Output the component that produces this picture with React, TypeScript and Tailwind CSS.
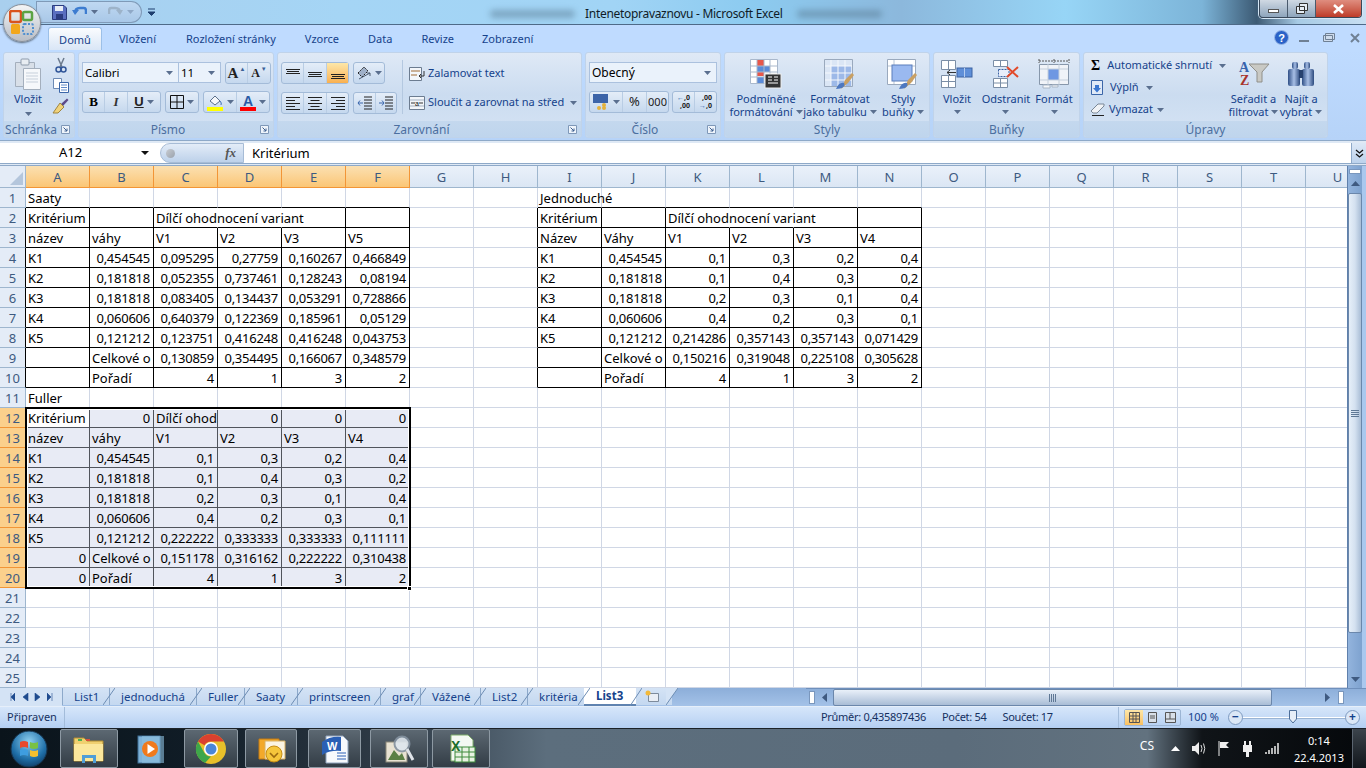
import type { ReactNode } from 'react';

const UI = { fontFamily: '"Noto Sans", sans-serif' };

const COLS = 'ABCDEFGHIJKLMNOPQRSTU'.split('');

// obsah listu: řádek -> sloupec -> text
const saaty: string[][] = [
  ['Kritérium', '', 'Dílčí ohodnocení variant', '', '', ''],
  ['název', 'váhy', 'V1', 'V2', 'V3', 'V5'],
  ['K1', '0,454545', '0,095295', '0,27759', '0,160267', '0,466849'],
  ['K2', '0,181818', '0,052355', '0,737461', '0,128243', '0,08194'],
  ['K3', '0,181818', '0,083405', '0,134437', '0,053291', '0,728866'],
  ['K4', '0,060606', '0,640379', '0,122369', '0,185961', '0,05129'],
  ['K5', '0,121212', '0,123751', '0,416248', '0,416248', '0,043753'],
  ['', 'Celkové o', '0,130859', '0,354495', '0,166067', '0,348579'],
  ['', 'Pořadí', '4', '1', '3', '2'],
];
const simple: string[][] = [
  ['Kritérium', '', 'Dílčí ohodnocení variant', '', '', ''],
  ['Název', 'Váhy', 'V1', 'V2', 'V3', 'V4'],
  ['K1', '0,454545', '0,1', '0,3', '0,2', '0,4'],
  ['K2', '0,181818', '0,1', '0,4', '0,3', '0,2'],
  ['K3', '0,181818', '0,2', '0,3', '0,1', '0,4'],
  ['K4', '0,060606', '0,4', '0,2', '0,3', '0,1'],
  ['K5', '0,121212', '0,214286', '0,357143', '0,357143', '0,071429'],
  ['', 'Celkové o', '0,150216', '0,319048', '0,225108', '0,305628'],
  ['', 'Pořadí', '4', '1', '3', '2'],
];
const fuller: string[][] = [
  ['Kritérium', '0', 'Dílčí ohod', '0', '0', '0'],
  ['název', 'váhy', 'V1', 'V2', 'V3', 'V4'],
  ['K1', '0,454545', '0,1', '0,3', '0,2', '0,4'],
  ['K2', '0,181818', '0,1', '0,4', '0,3', '0,2'],
  ['K3', '0,181818', '0,2', '0,3', '0,1', '0,4'],
  ['K4', '0,060606', '0,4', '0,2', '0,3', '0,1'],
  ['K5', '0,121212', '0,222222', '0,333333', '0,333333', '0,111111'],
  ['0', 'Celkové o', '0,151178', '0,316162', '0,222222', '0,310438'],
  ['0', 'Pořadí', '4', '1', '3', '2'],
];

function cellText(r: number, c: number): string {
  if (r === 1 && c === 0) return 'Saaty';
  if (r === 1 && c === 8) return 'Jednoduché';
  if (r === 11 && c === 0) return 'Fuller';
  if (r >= 2 && r <= 10 && c <= 5) return saaty[r - 2][c];
  if (r >= 2 && r <= 10 && c >= 8 && c <= 13) return simple[r - 2][c - 8];
  if (r >= 12 && r <= 20 && c <= 5) return fuller[r - 12][c];
  return '';
}

const inTable = (r: number, c: number) =>
  (r >= 2 && r <= 10 && ((c >= 0 && c <= 5) || (c >= 8 && c <= 13))) || (r >= 12 && r <= 20 && c >= 0 && c <= 5);
const inSelection = (r: number, c: number) => r >= 12 && r <= 20 && c <= 5;
const isMerged = (r: number, c: number) => r === 2 && (c === 2 || c === 3 || c === 10 || c === 11);
const spills = (r: number, c: number) => (r === 2 && (c === 2 || c === 10)) || (r === 1 && c === 8);

function Cell({ r, c }: { r: number; c: number }) {
  const text = cellText(r, c);
  const numeric = /^[0-9,]+$/.test(text);
  const sel = inSelection(r, c) && !(r === 12 && c === 0);
  const rightDark = inTable(r, c) || inTable(r, c + 1);
  const bottomDark = inTable(r, c) || inTable(r + 1, c);
  const rightBorder = isMerged(r, c)
    ? 'border-r-transparent'
    : inSelection(r, c) && c < 5
      ? 'border-r-[#50545c]'
      : rightDark
        ? 'border-r-black'
        : 'border-r-[#d0d7e5]';
  const bottomBorder = inSelection(r, c) && r < 20 ? 'border-b-[#50545c]' : bottomDark ? 'border-b-black' : 'border-b-[#d0d7e5]';
  return (
    <div
      className={`w-[64px] h-[20px] shrink-0 border-r border-b pl-[2px] pr-[3px] text-[13px] leading-[21px] text-black whitespace-nowrap ${rightBorder} ${bottomBorder} ${
        sel ? 'bg-[#e8ebf5]' : 'bg-white'
      } ${numeric ? 'text-right tracking-[-0.25px]' : 'text-left'} ${spills(r, c) ? 'overflow-visible z-10' : 'overflow-hidden'}`}
    >
      {text}
    </div>
  );
}

function Sheet() {
  const rows = Array.from({ length: 25 }, (_, i) => i + 1);
  return (
    <div className="relative flex-1 overflow-hidden bg-white">
      <div className="flex h-[22px]">
        <div className="w-[26px] h-[22px] shrink-0 border-r border-b border-[#9eb6ce] bg-[#e4ecf7] flex items-end justify-end p-[2px]">
          <svg width="14" height="14" viewBox="0 0 14 14"><path d="M14 1V14H1Z" fill="#b4c6dc" /></svg>
        </div>
        {COLS.map((name, c) => (
          <div
            key={name}
            className={`w-[64px] shrink-0 border-r border-b text-center text-[13px] leading-[22px] ${
              c <= 5
                ? 'border-[#f29536] bg-gradient-to-b from-[#fbe0b1] to-[#fbc675] text-[#3d5a80]'
                : 'border-[#9eb6ce] bg-gradient-to-b from-[#eaf1fa] to-[#dbe6f4] text-[#3d5a80]'
            }`}
          >
            {name}
          </div>
        ))}
      </div>
      {rows.map((r) => (
        <div key={r} className="flex h-[20px]">
          <div
            className={`w-[26px] shrink-0 border-r border-b text-center text-[13px] leading-[21px] text-[#3d5a80] ${
              r >= 12 && r <= 20
                ? 'border-b-[#f29536] border-r-[#f29536] bg-[#fbd08c]'
                : inTable(r, 0)
                  ? 'border-b-[#9eb6ce] border-r-black bg-[#e4ecf7]'
                  : 'border-[#9eb6ce] bg-[#e4ecf7]'
            }`}
          >
            {r}
          </div>
          {COLS.map((_, c) => (
            <Cell key={c} r={r} c={c} />
          ))}
        </div>
      ))}
      {/* rámeček výběru A12:F20 */}
      <div className="absolute z-20 left-[25px] top-[241px] w-[386px] h-[182px] border-2 border-black shadow-[inset_0_0_0_1px_#fff] pointer-events-none" />
      <div className="absolute z-20 left-[407px] top-[420px] w-[5px] h-[5px] bg-black border border-white pointer-events-none" />
    </div>
  );
}

function Caret({ className = '' }: { className?: string }) {
  return (
    <svg width="7" height="4" viewBox="0 0 7 4" className={`shrink-0 ${className}`}>
      <path d="M0 0H7L3.5 4Z" fill="#5a6f8f" />
    </svg>
  );
}

function Group({ w, label, launcher, children }: { w: number; label: string; launcher?: boolean; children: ReactNode }) {
  return (
    <div
      className="relative shrink-0 h-[86px] rounded-[3px] border border-[#c0d3ea] bg-gradient-to-b from-[#dfe9f6] via-[#cbdcf0] to-[#d5e3f4] flex flex-col overflow-hidden"
      style={{ width: w }}
    >
      <div className="h-[68px] flex">{children}</div>
      <div className={`h-[16px] bg-gradient-to-b from-[#c4d8ee] to-[#bfd5ed] text-center text-[12px] leading-[17px] text-[#4c6f9f] ${launcher ? 'pr-[16px]' : ''}`}>{label}</div>
      {launcher && (
        <svg width="9" height="9" viewBox="0 0 9 9" className="absolute right-[4px] bottom-[3px]">
          <path d="M.5.5H8.5V8.5H.5Z" fill="#eef4fb" stroke="#7f98b8" />
          <path d="M2.5 2.5L6 6M6 3.5V6H3.5" fill="none" stroke="#3d5f8f" />
        </svg>
      )}
    </div>
  );
}

function Strip({ children, className = '' }: { children: ReactNode; className?: string }) {
  return (
    <div className={`h-[22px] flex items-stretch rounded-[3px] border border-[#a3bbd8] bg-gradient-to-b from-[#e4edf8] to-[#c5d8ee] divide-x divide-[#b9cde4] ${className}`}>
      {children}
    </div>
  );
}

function StripBtn({ w, active, children }: { w: number; active?: boolean; children: ReactNode }) {
  return (
    <div
      className={`flex items-center justify-center gap-[3px] ${active ? 'bg-gradient-to-b from-[#fde7a8] to-[#f9b04f]' : ''}`}
      style={{ width: w }}
    >
      {children}
    </div>
  );
}

function Lines({ kind }: { kind: 'l' | 'c' | 'r' }) {
  const ws = [14, 9, 14, 9, 14];
  return (
    <svg width="16" height="14" viewBox="0 0 16 14">
      {ws.map((w, i) => {
        const x = kind === 'l' ? 1 : kind === 'c' ? 8 - w / 2 : 15 - w;
        return <rect key={i} x={x} y={1 + i * 3} width={w} height="1" fill="#222" />;
      })}
    </svg>
  );
}

function VAlign({ top }: { top: number }) {
  return (
    <svg width="16" height="14" viewBox="0 0 16 14">
      {[0, 2, 4].map((o) => (
        <rect key={o} x={o === 2 ? 2 : 1} y={top + o} width={o === 2 ? 12 : 14} height="1" fill="#222" />
      ))}
    </svg>
  );
}

function RibbonLabel({ lines, carets = true }: { lines: string[]; carets?: boolean }) {
  return (
    <div className="text-center text-[11px] leading-[13px] text-[#15428b] whitespace-nowrap">
      {lines.map((l, i) => (
        <div key={i} className="flex items-center justify-center gap-[3px]">
          {l}
          {carets && i === lines.length - 1 && <Caret />}
        </div>
      ))}
    </div>
  );
}

function BigButton({ w, icon, lines, caretBelow }: { w: number; icon: ReactNode; lines: string[]; caretBelow?: boolean }) {
  return (
    <div className="flex flex-col items-center pt-[4px] shrink-0" style={{ width: w }}>
      <div className="h-[33px] flex items-center justify-center">{icon}</div>
      <div className="mt-[2px]">
        <RibbonLabel lines={lines} carets={!caretBelow} />
        {caretBelow && (
          <div className="flex justify-center mt-[5px]">
            <Caret />
          </div>
        )}
      </div>
    </div>
  );
}

function CondFormatIcon() {
  return (
    <svg width="32" height="30" viewBox="0 0 32 30">
      <path d="M.5.5H27.5V24.5H.5Z" fill="#fff" stroke="#a9b8cc" />
      <rect x="7" y="1" width="7" height="16" fill="#e8574a" />
      <rect x="7" y="7" width="13" height="6" fill="#5b8bd8" />
      <rect x="7" y="18" width="7" height="6" fill="#5b8bd8" />
      <path d="M7 1V25M14 1V25M20 1V25M1 7H28M1 13H28M1 18H28" stroke="#a9b8cc" fill="none" />
      <rect x="15" y="15" width="16" height="14" fill="#333" stroke="#eee" />
      <path d="M18 18H22M18 21H22M18 24H28M24 18H28M24 21H28" stroke="#fff" />
    </svg>
  );
}

function Brush() {
  return (
    <g>
      <path d="M17 30L21 21L28 14L30 16L24 24Z" fill="#c9a063" />
      <path d="M12 30C14 25 17 23 20 24C22 27 18 30 12 30Z" fill="#4d78c0" />
    </g>
  );
}

function TableFormatIcon() {
  return (
    <svg width="32" height="30" viewBox="0 0 32 30">
      <path d="M.5.5H28.5V27.5H.5Z" fill="#dbe6f5" stroke="#9aa9bd" />
      <rect x="7" y="7" width="20" height="20" fill="#9db9e8" />
      <path d="M7 1V27M14 1V27M21 1V27M1 7H28M1 14H28M1 21H28" stroke="#f5f8fc" fill="none" />
      <Brush />
    </svg>
  );
}

function CellStyleIcon() {
  return (
    <svg width="32" height="30" viewBox="0 0 32 30">
      <path d="M.5.5H28.5V25.5H.5Z" fill="#fff" stroke="#9aa9bd" />
      <path d="M1 7H28M7 1V25" stroke="#b5c3d5" />
      <rect x="5" y="6" width="20" height="16" fill="#9ab9f0" stroke="#5b7fbb" />
      <Brush />
    </svg>
  );
}

function InsertCellsIcon() {
  return (
    <svg width="32" height="28" viewBox="0 0 32 28">
      <path d="M.5.5H14.5V9.5H.5ZM.5 15.5H14.5V27.5H.5ZM7.5.5V9.5M7.5 15.5V27.5M.5 21.5H14.5" fill="#fff" stroke="#7b8ea6" />
      <path d="M15 12.5H6M9 10L6 12.5L9 15" fill="none" stroke="#333" />
      <rect x="16" y="8" width="15" height="9" fill="#5f8fd8" stroke="#3c63a2" />
      <path d="M23.5 8V17" stroke="#b5cdf0" />
    </svg>
  );
}

function DeleteCellsIcon() {
  return (
    <svg width="26" height="28" viewBox="0 0 26 28">
      <path d="M.5.5H14.5V6.5H.5ZM.5 18.5H14.5V27.5H.5ZM7.5.5V6.5M7.5 18.5V27.5M.5 23H14.5" fill="#fff" stroke="#7b8ea6" />
      <path d="M5.5 9.5H16V16.5H5.5Z" fill="#e8eefb" stroke="#3c63a2" strokeDasharray="2 1" />
      <path d="M14 7L25 17M25 7L14 17" stroke="#e24a2a" strokeWidth="2" />
    </svg>
  );
}

function FormatCellsIcon() {
  return (
    <svg width="32" height="30" viewBox="0 0 32 30">
      <path d="M1 2H31M1 0V4M31 0V4M16 0V4" stroke="#555" strokeDasharray="2 1" fill="none" />
      <path d="M1.5 5.5H30.5V25.5H1.5Z" fill="#f0f3f8" stroke="#8797ab" />
      <rect x="10" y="10" width="11" height="11" fill="#6e97e2" />
      <path d="M10 5V26M21 5V26M2 10H30M2 21H30" stroke="#c4cfdc" />
      <path d="M5 26H12V29H5ZM14 26H20V28H14Z" fill="#f5f7fa" stroke="#a9b6c6" />
    </svg>
  );
}

function SortIcon() {
  return (
    <svg width="32" height="32" viewBox="0 0 32 32">
      <path d="M11 6H31L24 14V24H19V14Z" fill="#c9c9c4" stroke="#8f8f8a" />
      <text x="1" y="14" fontSize="14" fontFamily="'Liberation Serif', serif" fontWeight="700" fill="#3763ad">A</text>
      <text x="2" y="27" fontSize="14" fontFamily="'Liberation Serif', serif" fontWeight="700" fill="#a8342c">Z</text>
    </svg>
  );
}

function BinocularsIcon() {
  return (
    <svg width="28" height="26" viewBox="0 0 28 26">
      <defs>
        <linearGradient id="bin" x1="0" x2="1">
          <stop offset="0" stopColor="#2f4f86" />
          <stop offset=".5" stopColor="#a8bfe6" />
          <stop offset="1" stopColor="#2c4a7e" />
        </linearGradient>
      </defs>
      <rect x="5" y="1" width="6" height="7" rx="2" fill="url(#bin)" />
      <rect x="17" y="1" width="6" height="7" rx="2" fill="url(#bin)" />
      <rect x="1" y="8" width="12" height="17" rx="2" fill="url(#bin)" />
      <rect x="15" y="8" width="12" height="17" rx="2" fill="url(#bin)" />
      <rect x="12" y="9" width="4" height="8" fill="#27416f" />
    </svg>
  );
}

function Ribbon() {
  return (
    <div className="h-[91px] bg-gradient-to-b from-[#bfdbff] to-[#b6d3f8] flex gap-[3px] pl-[3px] pt-[2px] border-b border-[#8ea9c8]">
      <Group w={72} label="Schránka" launcher>
        <div className="w-[48px] flex flex-col items-center pt-[5px]">
          <svg width="28" height="32" viewBox="0 0 28 32">
            <path d="M1.5 4.5H20.5V28.5H1.5Z" fill="#d8dfe8" stroke="#a4afbd" />
            <rect x="7" y="1" width="8" height="6" rx="1" fill="#e8edf2" stroke="#8e9bab" />
            <path d="M9.5 10.5H26.5V31.5H9.5Z" fill="#f6f8fb" stroke="#a4afbd" />
            <path d="M12 15H24M12 18H24M12 21H24M12 24H24" stroke="#c7d0db" />
          </svg>
          <div className="mt-[2px] text-[11px] leading-[14px] text-[#15428b]">Vložit</div>
          <Caret className="mt-[6px]" />
        </div>
        <div className="flex flex-col items-center gap-[5px] pt-[4px]">
          <svg width="14" height="16" viewBox="0 0 14 16">
            <path d="M4 1L8 10M10 1L6 10" stroke="#6c7a8d" strokeWidth="1.5" />
            <circle cx="4.5" cy="12.5" r="2.5" fill="none" stroke="#33589a" strokeWidth="1.5" />
            <circle cx="9.5" cy="12.5" r="2.5" fill="none" stroke="#33589a" strokeWidth="1.5" />
          </svg>
          <svg width="16" height="15" viewBox="0 0 16 15">
            <path d="M.5.5H8.5V10.5H.5Z" fill="#fff" stroke="#6c8ab5" />
            <path d="M6.5 4.5H15.5V14.5H6.5Z" fill="#fff" stroke="#3b66a8" />
            <path d="M8 7H14M8 9.5H14M8 12H14" stroke="#5f8ac8" />
          </svg>
          <svg width="17" height="16" viewBox="0 0 17 16">
            <path d="M9 6L15 .5L16.5 2L11 8Z" fill="#5d4b8a" />
            <path d="M8 5L12 9L6 15H1Z" fill="#f0d27a" stroke="#a08540" />
          </svg>
        </div>
      </Group>
      <Group w={196} label="Písmo" launcher>
        <div className="pl-[3px] pt-[9px] flex flex-col gap-[8px]">
          <div className="flex h-[21px]">
            <div className="w-[97px] border border-[#abc1de] bg-[#eaf2fb] flex items-center justify-between px-[2px] pr-[5px] text-[11.5px] text-black">
              Calibri
              <Caret />
            </div>
            <div className="w-[42px] border border-l-0 border-[#abc1de] bg-[#eaf2fb] flex items-center justify-between px-[2px] pr-[5px] text-[11.5px] text-black">
              11
              <Caret />
            </div>
            <Strip className="ml-[4px] h-[21px]">
              <StripBtn w={22}>
                <span className="text-[15px] font-bold text-[#222] leading-none" style={{ fontFamily: '"Liberation Serif", serif' }}>A</span>
                <span className="text-[6px] text-[#3a5f96] -mt-[8px] -ml-[2px]">▲</span>
              </StripBtn>
              <StripBtn w={22}>
                <span className="text-[12px] font-bold text-[#222] leading-none" style={{ fontFamily: '"Liberation Serif", serif' }}>A</span>
                <span className="text-[6px] text-[#3a5f96] -mt-[8px] -ml-[2px]">▼</span>
              </StripBtn>
            </Strip>
          </div>
          <div className="flex gap-[4px]">
            <Strip>
              <StripBtn w={22}><span className="text-[13px] font-bold text-black" style={{ fontFamily: '"Liberation Serif", serif' }}>B</span></StripBtn>
              <StripBtn w={23}><span className="text-[13px] italic font-bold text-[#333]" style={{ fontFamily: '"Liberation Serif", serif' }}>I</span></StripBtn>
              <StripBtn w={32}>
                <span className="text-[13px] font-bold underline text-[#222]" style={{ fontFamily: '"Liberation Sans", sans-serif' }}>U</span>
                <Caret />
              </StripBtn>
            </Strip>
            <Strip>
              <StripBtn w={32}>
                <svg width="14" height="14" viewBox="0 0 14 14"><path d="M.5.5H13.5V13.5H.5ZM7 .5V13.5M.5 7H13.5" fill="none" stroke="#111" /></svg>
                <Caret />
              </StripBtn>
            </Strip>
            <Strip>
              <StripBtn w={33}>
                <svg width="17" height="17" viewBox="0 0 17 17">
                  <path d="M3 7L8 2L13 7L8 11Z" fill="#f5f7fa" stroke="#5b6f8a" />
                  <path d="M13 7Q15 9 14 11" stroke="#3f6fb5" fill="none" />
                  <rect x="0" y="13" width="16" height="4" fill="#ffff00" />
                </svg>
                <Caret />
              </StripBtn>
              <StripBtn w={32}>
                <span className="relative w-[16px] h-[17px] text-center text-[14px] leading-[14px] font-bold text-[#2a5aa5]" style={{ fontFamily: '"Liberation Sans", sans-serif' }}>
                  A
                  <span className="absolute left-0 bottom-0 w-[16px] h-[4px] bg-[#ff0000]" />
                </span>
                <Caret />
              </StripBtn>
            </Strip>
          </div>
        </div>
      </Group>
      <Group w={305} label="Zarovnání" launcher>
        <div className="pl-[3px] pt-[9px] w-[121px] shrink-0 flex flex-col gap-[8px]">
          <div className="flex gap-[4px]">
            <Strip className="h-[21px]">
              <StripBtn w={22}><VAlign top={3} /></StripBtn>
              <StripBtn w={23}><VAlign top={6} /></StripBtn>
              <StripBtn w={21} active><VAlign top={8} /></StripBtn>
            </Strip>
            <Strip className="h-[21px]">
              <StripBtn w={30}>
                <svg width="16" height="15" viewBox="0 0 16 15">
                  <path d="M2 7L8 1L12 5L6 11Z" fill="#9fb0c8" stroke="#222" strokeDasharray="2 1" />
                  <path d="M3 13L14 7M11 7H14V10" stroke="#4a5a70" fill="none" />
                </svg>
                <Caret />
              </StripBtn>
            </Strip>
          </div>
          <div className="flex gap-[4px]">
            <Strip>
              <StripBtn w={22}><Lines kind="l" /></StripBtn>
              <StripBtn w={23}><Lines kind="c" /></StripBtn>
              <StripBtn w={21}><Lines kind="r" /></StripBtn>
            </Strip>
            <Strip>
              <StripBtn w={22}>
                <svg width="16" height="14" viewBox="0 0 16 14"><path d="M7 1H15M7 4H15M7 7H15M7 10H15M7 13H15" stroke="#222" /><path d="M1 7H6M3 4.5L1 7L3 9.5" stroke="#3a67ad" fill="none" /></svg>
              </StripBtn>
              <StripBtn w={20}>
                <svg width="16" height="14" viewBox="0 0 16 14"><path d="M7 1H15M7 4H15M7 7H15M7 10H15M7 13H15" stroke="#222" /><path d="M1 7H6M4 4.5L6 7L4 9.5" stroke="#3a67ad" fill="none" /></svg>
              </StripBtn>
            </Strip>
          </div>
        </div>
        <div className="ml-[3px] mt-[7px] w-px h-[54px] bg-[#b4c8e0]" />
        <div className="ml-[6px] pt-[10px] flex flex-col gap-[8px] text-[11px] text-[#15428b]">
          <div className="flex items-center gap-[3px] h-[21px] whitespace-nowrap">
            <svg width="16" height="14" viewBox="0 0 16 14">
              <path d="M.5.5H12.5V13.5H.5Z" fill="#f3f6fa" stroke="#6c7c90" />
              <path d="M2 4H11M2 8H8" stroke="#a06a35" />
              <path d="M15 4V9H10M12 7L10 9L12 11" stroke="#333" fill="none" />
            </svg>
            Zalamovat text
          </div>
          <div className="flex items-center gap-[3px] h-[21px] whitespace-nowrap">
            <svg width="16" height="14" viewBox="0 0 16 14">
              <path d="M.5.5H15.5V13.5H.5Z" fill="#f3f6fa" stroke="#6c7c90" />
              <path d="M1 4H15M1 10H15" stroke="#a5b2c2" />
              <path d="M2 7H6M10 7H14" stroke="#333" />
              <text x="6" y="10" fontSize="7" fontFamily="'Liberation Sans', sans-serif" fill="#111">a</text>
            </svg>
            Sloučit a zarovnat na střed
            <Caret className="ml-[3px]" />
          </div>
        </div>
      </Group>
      <Group w={136} label="Číslo" launcher>
        <div className="pl-[3px] pt-[9px] flex flex-col gap-[8px]">
          <div className="w-[128px] h-[21px] border border-[#abc1de] bg-[#eaf2fb] flex items-center justify-between px-[2px] pr-[5px] text-[12px] text-black">
            Obecný
            <Caret />
          </div>
          <div className="flex gap-[3px]">
            <Strip>
              <StripBtn w={33}>
                <svg width="17" height="17" viewBox="0 0 17 17">
                  <rect x="0" y="0" width="15" height="9" fill="#3c64a8" />
                  <circle cx="11" cy="11" r="2" fill="#e4b23c" />
                  <circle cx="11" cy="14" r="2" fill="#e4b23c" />
                  <circle cx="6" cy="14" r="2" fill="#e4b23c" />
                </svg>
                <Caret />
              </StripBtn>
              <StripBtn w={24}><span className="text-[13px] text-[#222]">%</span></StripBtn>
              <StripBtn w={21}><span className="text-[11px] text-[#222]">000</span></StripBtn>
            </Strip>
            <Strip>
              <StripBtn w={22}><span className="text-[7px] leading-[8px] text-right text-[#222] font-bold"><span className="text-[#3a67ad]">←</span>,0<br />,00</span></StripBtn>
              <StripBtn w={21}><span className="text-[7px] leading-[8px] text-right text-[#222] font-bold">,00<br /><span className="text-[#3a67ad]">→</span>,0</span></StripBtn>
            </Strip>
          </div>
        </div>
      </Group>
      <Group w={206} label="Styly">
        <div className="w-[5px]" />
        <BigButton w={72} icon={<CondFormatIcon />} lines={['Podmíněné', 'formátování']} />
        <BigButton w={76} icon={<TableFormatIcon />} lines={['Formátovat', 'jako tabulku']} />
        <BigButton w={50} icon={<CellStyleIcon />} lines={['Styly', 'buňky']} />
      </Group>
      <Group w={147} label="Buňky">
        <BigButton w={46} icon={<InsertCellsIcon />} lines={['Vložit']} caretBelow />
        <BigButton w={52} icon={<DeleteCellsIcon />} lines={['Odstranit']} caretBelow />
        <BigButton w={44} icon={<FormatCellsIcon />} lines={['Formát']} caretBelow />
      </Group>
      <Group w={245} label="Úpravy">
        <div className="w-[142px] shrink-0 pl-[7px] pt-[3px] flex flex-col gap-[3px] text-[11px] text-[#15428b]">
          <div className="h-[19px] flex items-center gap-[7px] whitespace-nowrap">
            <span className="w-[12px] text-center text-[14px] font-bold text-black" style={{ fontFamily: '"Liberation Serif", serif' }}>Σ</span>
            Automatické shrnutí
            <Caret />
          </div>
          <div className="h-[19px] flex items-center gap-[7px] whitespace-nowrap">
            <svg width="12" height="15" viewBox="0 0 12 15">
              <path d="M.5.5H11.5V14.5H.5Z" fill="#dfe9f7" stroke="#3b66a8" />
              <path d="M4 5V8H2L6 12.5L10 8H8V5Z" fill="#3b77d0" />
            </svg>
            Výplň
            <Caret />
          </div>
          <div className="h-[19px] flex items-center gap-[4px] whitespace-nowrap">
            <svg width="15" height="13" viewBox="0 0 15 13" className="-ml-[1px]">
              <path d="M1 8L8 1H14L14 3L7 10H3Z" fill="#f1f3f6" stroke="#7a8796" />
              <path d="M2 12.5H14" stroke="#222" />
            </svg>
            Vymazat
            <Caret />
          </div>
        </div>
        <BigButton w={55} icon={<SortIcon />} lines={['Seřadit a', 'filtrovat']} />
        <BigButton w={40} icon={<BinocularsIcon />} lines={['Najít a', 'vybrat']} />
      </Group>
    </div>
  );
}

function FormulaBar() {
  return (
    <div className="h-[25px] pt-[2px] bg-[#dfe9f5] border-b border-[#8ea9c8]">
      <div className="h-[21px] flex bg-white border-b border-[#8ea9c8]">
        <div className="w-[160px] flex items-center text-[13px] text-black">
          <span className="w-[141px] text-center">A12</span>
          <svg width="8" height="4" viewBox="0 0 8 4"><path d="M0 0H8L4 4Z" fill="#111" /></svg>
        </div>
        <div className="w-[84px] rounded-l-full border border-[#a7bcd6] bg-gradient-to-b from-[#e3ecf8] to-[#bdd1ea] flex items-center justify-between pl-[5px] pr-[7px]">
          <span className="w-[9px] h-[9px] rounded-full bg-gradient-to-br from-[#c8ccd2] to-[#9aa2ac]" />
          <span className="text-[13px] italic font-bold text-[#555]" style={{ fontFamily: '"Liberation Serif", serif' }}>fx</span>
        </div>
        <div className="flex-1 pl-[8px] text-[13px] leading-[20px] text-black">Kritérium</div>
        <div className="w-[15px] border-l border-[#8ea9c8] bg-gradient-to-b from-[#dce8f6] to-[#bcd2ec] flex items-center justify-center">
          <svg width="9" height="9" viewBox="0 0 9 9"><path d="M1 1L4.5 4L8 1M1 5L4.5 8L8 5" fill="none" stroke="#111" strokeWidth="1.3" /></svg>
        </div>
      </div>
    </div>
  );
}

function VScrollbar() {
  return (
    <div className="w-[19px] shrink-0 flex border-l border-[#5f80ac]">
      <div className="w-[14px] bg-gradient-to-r from-[#93b4dd] to-[#7ea2cf] flex flex-col items-stretch pt-[3px]">
        <div className="h-[5px] bg-white border border-[#7a97bd] mx-[1px]" />
        <div className="h-[19px] flex items-center justify-center">
          <svg width="9" height="5" viewBox="0 0 9 5"><path d="M0 5L4.5 0L9 5Z" fill="#3f5a80" /></svg>
        </div>
        <div className="h-[440px] border border-[#6b87ab] rounded-[2px] bg-gradient-to-r from-[#e6eff9] via-[#d4e1f0] to-[#a9bdd6] flex flex-col items-center justify-center gap-[1px]">
          <div className="w-[8px] h-px bg-[#5f7895]" />
          <div className="w-[8px] h-px bg-[#5f7895]" />
          <div className="w-[8px] h-px bg-[#5f7895]" />
          <div className="w-[8px] h-px bg-[#5f7895]" />
        </div>
        <div className="flex-1 flex items-end justify-center pb-[6px]">
          <svg width="9" height="5" viewBox="0 0 9 5"><path d="M0 0L4.5 5L9 0Z" fill="#3f5a80" /></svg>
        </div>
      </div>
      <div className="flex-1 bg-[#aac8ee]" />
    </div>
  );
}

// šířky záložek podle předlohy
const TABS: [string, number][] = [
  ['List1', 47],
  ['jednoduchá', 87],
  ['Fuller', 48],
  ['Saaty', 53],
  ['printscreen', 83],
  ['graf', 40],
  ['Vážené', 60],
  ['List2', 47],
  ['kritéria', 57],
];

function SheetTabs() {
  return (
    <div className="h-[18px] flex bg-gradient-to-b from-[#8caed9] to-[#a4c2e8] text-[11.5px] text-[#15428b]">
      <div className="w-[62px] shrink-0 flex items-center justify-around px-[4px] text-[#1f4b8f] bg-[#d4e3f5]">
        {['M5 0V8M5 4L9 0V8Z', 'M8 0V8L3 4Z', 'M2 0V8L7 4Z', 'M0 0L4 4L0 8ZM5 0V8'].map((d) => (
          <svg key={d} width="9" height="8" viewBox="0 0 9 8"><path d={d} fill="#1f4b8f" stroke="#1f4b8f" strokeWidth=".6" /></svg>
        ))}
      </div>
      {TABS.map(([t, w]) => (
        <div
          key={t}
          className="relative shrink-0 flex items-center pl-[11px] h-[17px] border-l border-[#8da9ca] bg-gradient-to-b from-[#d4e3f5] to-[#c4d8f0] whitespace-nowrap"
          style={{ width: w }}
        >
          {t}
          <svg width="12" height="17" viewBox="0 0 12 17" className="absolute -right-[6px] top-0 z-10">
            <path d="M12 0L0 17" stroke="#6d8db4" />
          </svg>
        </div>
      ))}
      <div className="relative shrink-0 w-[52px] flex items-center pl-[12px] h-[18px] bg-white font-bold text-[#15428b] border-b-2 border-[#5f83b0] whitespace-nowrap">
        List3
        <svg width="12" height="18" viewBox="0 0 12 18" className="absolute -right-[6px] top-0 z-10">
          <path d="M12 0L0 18" stroke="#6d8db4" />
        </svg>
      </div>
      <div className="relative pl-[9px] pr-[12px] pt-[2px] h-[17px] shrink-0 bg-gradient-to-b from-[#d4e3f5] to-[#c4d8f0]">
        <svg width="15" height="13" viewBox="0 0 15 13">
          <path d="M3.5 3.5H13.5V11.5H3.5Z" fill="#e9eef5" stroke="#7d8b9c" />
          <circle cx="3" cy="3" r="2.5" fill="#f2b93b" />
        </svg>
        <svg width="12" height="17" viewBox="0 0 12 17" className="absolute -right-[6px] top-0 z-10">
          <path d="M0 17L12 0V0H0Z" fill="#d4e3f5" />
          <path d="M12 0L0 17" stroke="#6d8db4" />
        </svg>
      </div>
      <div className="ml-auto w-[560px] shrink-0 flex items-stretch border-t border-[#6f90bc]">
        <div className="w-[9px] flex items-center justify-end"><span className="w-[6px] h-[13px] bg-white border border-[#7a97bd]" /></div>
        <div className="w-[18px] flex items-center justify-center"><svg width="5" height="9" viewBox="0 0 5 9"><path d="M5 0V9L0 4.5Z" fill="#3f5a80" /></svg></div>
        <div className="w-[439px] border border-[#6b87ab] rounded-[2px] bg-gradient-to-b from-[#e9f0f9] to-[#a9bdd6] flex items-center justify-center gap-[1px]">
          <span className="w-px h-[8px] bg-[#5f7895]" />
          <span className="w-px h-[8px] bg-[#5f7895]" />
          <span className="w-px h-[8px] bg-[#5f7895]" />
          <span className="w-px h-[8px] bg-[#5f7895]" />
        </div>
        <div className="flex-1 flex items-center justify-end pr-[8px]"><svg width="5" height="9" viewBox="0 0 5 9"><path d="M0 0V9L5 4.5Z" fill="#3f5a80" /></svg></div>
        <div className="w-[28px] flex items-center"><span className="w-[6px] h-[13px] bg-white border border-[#7a97bd]" /></div>
      </div>
    </div>
  );
}

function StatusBar() {
  return (
    <div className="h-[22px] flex items-center bg-gradient-to-b from-[#d6e6fa] via-[#c6dbf6] to-[#b4cff2] border-t border-[#e6effa] text-[11px] text-[#15305f] whitespace-nowrap">
      <div className="w-[65px] shrink-0 pl-[7px] h-full leading-[20px] border-r border-[#a3bcda]">Připraven</div>
      <div className="ml-[756px] w-[297px] shrink-0 flex gap-[16px] tracking-[-0.3px]">
        <span>Průměr: 0,435897436</span>
        <span>Počet: 54</span>
        <span>Součet: 17</span>
      </div>
      <div className="w-px h-full bg-[#a3bcda]" />
      <div className="ml-[5px] flex h-[17px] w-[57px] border border-[#9cb5d4] rounded-[2px]">
        <div className="w-[19px] bg-gradient-to-b from-[#fde7a8] to-[#f9c060] flex items-center justify-center">
          <svg width="11" height="11" viewBox="0 0 11 11"><path d="M.5.5H10.5V10.5H.5ZM4 .5V10.5M7 .5V10.5M.5 4H10.5M.5 7H10.5" fill="none" stroke="#555" /></svg>
        </div>
        <div className="w-[19px] flex items-center justify-center">
          <svg width="9" height="11" viewBox="0 0 9 11"><path d="M.5.5H8.5V10.5H.5Z" fill="#d8dfe8" stroke="#555" /><path d="M2 4H7M2 6H7" stroke="#555" /></svg>
        </div>
        <div className="w-[19px] flex items-center justify-center">
          <svg width="11" height="11" viewBox="0 0 11 11"><path d="M.5.5H10.5V10.5H.5ZM5 .5V7M.5 7H10.5" fill="#d8dfe8" stroke="#555" /></svg>
        </div>
      </div>
      <span className="ml-[7px] w-[33px] text-[#15428b]">100 %</span>
      <div className="ml-[7px] flex items-center">
        <span className="w-[15px] h-[15px] rounded-full border border-[#7d9ac0] bg-[#dbe7f6] text-center text-[12px] leading-[12px] font-bold text-[#15428b]">−</span>
        <div className="relative w-[102px] h-px bg-[#fff] shadow-[0_1px_0_#9ab4d4]">
          <svg width="8" height="14" viewBox="0 0 8 14" className="absolute left-[46px] -top-[7px]">
            <path d="M.5.5H7.5V9L4 13L.5 9Z" fill="#e6eef8" stroke="#4d6e99" />
          </svg>
        </div>
        <span className="w-[15px] h-[15px] rounded-full border border-[#7d9ac0] bg-[#dbe7f6] text-center text-[12px] leading-[12px] font-bold text-[#15428b]">+</span>
      </div>
    </div>
  );
}

function TaskButton({ w, ml, icon, plain }: { w: number; ml: number; icon: ReactNode; plain?: boolean }) {
  return (
    <div
      className={`h-[39px] shrink-0 flex items-center justify-center rounded-[2px] ${
        plain ? '' : 'border border-[#8d99a3] bg-gradient-to-b from-[#5c6872] to-[#333d46]'
      }`}
      style={{ width: w, marginLeft: ml }}
    >
      {icon}
    </div>
  );
}

function Taskbar() {
  return (
    <div className="h-[40px] flex items-center bg-[linear-gradient(90deg,#0a141b_0%,#101c26_14%,#333f4b_30%,#5c6e7d_40%,#5b6c7b_70%,#62727f_84%,#101418_88%,#05080b_100%)] border-t border-[#1c2228] text-white">
      <div className="w-[44px] h-[36px] ml-[7px] shrink-0 flex items-center justify-center">
        <svg width="38" height="38" viewBox="0 0 38 38">
          <defs>
            <radialGradient id="orb" cx=".5" cy=".3" r=".8">
              <stop offset="0" stopColor="#8fd0f0" />
              <stop offset=".6" stopColor="#1f6fa8" />
              <stop offset="1" stopColor="#0a2e52" />
            </radialGradient>
          </defs>
          <circle cx="19" cy="19" r="18" fill="url(#orb)" stroke="#16344f" />
          <path d="M10 12Q14 10 18 12V18Q14 16 10 18Z" fill="#e8482e" />
          <path d="M20 12Q24 14 28 12V18Q24 20 20 18Z" fill="#79c143" />
          <path d="M10 20Q14 18 18 20V26Q14 24 10 26Z" fill="#3e9de0" />
          <path d="M20 20Q24 22 28 20V26Q24 28 20 26Z" fill="#f5c02f" />
        </svg>
      </div>
      <TaskButton w={58} ml={9} icon={
        <svg width="34" height="32" viewBox="0 0 34 32">
          <path d="M2 5H12L15 8H31V28H2Z" fill="#f0d070" stroke="#b08c30" />
          <path d="M2 11H31V28H2Z" fill="#fbe79c" />
          <path d="M10 22H24V30H21V25H13V30H10Z" fill="#4f9ed8" />
          <rect x="6" y="6" width="4" height="2" fill="#4fb04f" />
          <rect x="14" y="6" width="4" height="2" fill="#d8503c" />
        </svg>} />
      <TaskButton w={58} ml={4} plain icon={
        <svg width="28" height="32" viewBox="0 0 28 32">
          <rect x="1" y="3" width="22" height="27" fill="#7fb2d8" stroke="#3f6e96" />
          <rect x="5" y="3" width="22" height="27" fill="#8cc0e0" opacity=".6" />
          <circle cx="13" cy="16" r="8" fill="#f07a1c" />
          <path d="M10.5 11V21L18 16Z" fill="#fff" />
        </svg>} />
      <TaskButton w={54} ml={4} icon={
        <svg width="32" height="32" viewBox="0 0 32 32">
          <circle cx="16" cy="16" r="15" fill="#e8c02a" />
          <path d="M16 1A15 15 0 0 1 29 8.5H16A7.5 7.5 0 0 0 9.5 12.2L3 8.5A15 15 0 0 1 16 1Z" fill="#d9402f" />
          <path d="M3 8.5L9.5 20A7.5 7.5 0 0 0 16 23.5L10 30A15 15 0 0 1 3 8.5Z" fill="#3ea64a" />
          <circle cx="16" cy="16" r="7" fill="#fff" />
          <circle cx="16" cy="16" r="5.5" fill="#4a86d8" />
        </svg>} />
      <TaskButton w={52} ml={7} icon={
        <svg width="32" height="32" viewBox="0 0 32 32">
          <path d="M4 6H24V26H4Z" fill="#f3a92a" stroke="#c47a12" />
          <path d="M10 8H30V26H10Z" fill="#fbf4e2" stroke="#d9b060" />
          <circle cx="19" cy="21" r="8" fill="#f5c63b" stroke="#c78d14" />
          <path d="M15 20L19 24L23 20" stroke="#9a6a10" strokeWidth="1.6" fill="none" />
        </svg>} />
      <TaskButton w={53} ml={11} icon={
        <svg width="32" height="32" viewBox="0 0 32 32">
          <path d="M7 3H24L29 8V30H7Z" fill="#f7f9fc" stroke="#8fa3bd" />
          <path d="M3 9Q11 3 22 4V18Q11 17 3 22Z" fill="#2a5fb5" />
          <text x="8" y="17" fontSize="11" fontWeight="700" fontFamily="'Liberation Sans', sans-serif" fill="#fff">W</text>
          <path d="M18 20H27M18 23H27M18 26H27" stroke="#2a5fb5" />
        </svg>} />
      <TaskButton w={58} ml={9} icon={
        <svg width="32" height="32" viewBox="0 0 32 32">
          <rect x="3" y="9" width="21" height="20" fill="#e8e2d2" stroke="#8b8778" />
          <path d="M5 27L11 17L16 23L19 20L22 27Z" fill="#5b8044" />
          <circle cx="19" cy="11" r="7.5" fill="#dfe7ee" stroke="#8492a0" strokeWidth="2" opacity=".9" />
          <path d="M24 16L30 27" stroke="#dfe3e8" strokeWidth="3" />
        </svg>} />
      <TaskButton w={58} ml={4} icon={
        <svg width="32" height="32" viewBox="0 0 32 32">
          <path d="M6 2H23L28 7V28H6Z" fill="#f4f8f2" stroke="#7fae6a" />
          <rect x="10" y="14" width="20" height="15" fill="#e8f2e2" stroke="#3d8a3a" />
          <path d="M10 19H30M10 24H30M17 14V29M24 14V29" stroke="#3d8a3a" />
          <text x="6" y="18" fontSize="14" fontWeight="700" fontFamily="'Liberation Sans', sans-serif" fill="#1b6e2c">X</text>
        </svg>} />
      <div className="flex-1" />
      <span className="text-[12px] mr-[17px] -mt-[6px]">CS</span>
      <div className="flex items-center gap-[11px] mr-[11px]">
        <svg width="9" height="5" viewBox="0 0 9 5"><path d="M0 5L4.5 0L9 5Z" fill="#fff" /></svg>
        <svg width="16" height="15" viewBox="0 0 16 15"><path d="M1 5H4L8 1V14L4 10H1Z" fill="#eee" /><path d="M10 4Q12 7.5 10 11M12.5 2.5Q15 7.5 12.5 12.5" stroke="#ddd" fill="none" /></svg>
        <svg width="12" height="15" viewBox="0 0 12 15"><path d="M1 0V15" stroke="#eee" /><path d="M2 1H11L8 4L11 7H2Z" fill="#eee" /></svg>
        <svg width="13" height="16" viewBox="0 0 13 16"><path d="M2 4H11V11H8V16H5V11H2Z" fill="#eee" /><path d="M4 0V4M9 0V4" stroke="#eee" strokeWidth="2" /></svg>
        <svg width="15" height="11" viewBox="0 0 15 11"><path d="M1 9V11M4 7V11M7 5V11M10 3V11M13 0V11" stroke="#eee" strokeWidth="1.5" /></svg>
      </div>
      <div className="w-[56px] text-center text-[11px] leading-[17px]">
        <div>0:14</div>
        <div>22.4.2013</div>
      </div>
      <div className="w-[14px] ml-[5px] h-full border-l border-[#5b6570] bg-gradient-to-b from-[#3c444c] to-[#12171c]" />
    </div>
  );
}

function TitleBar() {
  return (
    <div className="relative h-[25px] bg-[linear-gradient(90deg,#a9cfee_0%,#a5d5f5_25%,#a1d4f5_45%,#8ccbf0_55%,#8cb8dc_66%,#97d5f6_78%,#7cb4d8_88%,#3c5a74_92%,#a7cbe5_95%,#c8dff2_100%)] border-b border-[#4e6a88]">
      <div className="flex items-center h-full pl-[36px]">
        <div className="h-[22px] w-[106px] rounded-r-full rounded-tl-[8px] border border-[#7f9ab8] bg-gradient-to-b from-[#bfd8f2] to-[#a9c8e8] flex items-center pl-[15px] gap-[5px]">
          <svg width="15" height="15" viewBox="0 0 15 15">
            <path d="M.5.5H12L14.5 3V14.5H.5Z" fill="#5a6fc0" stroke="#2b3c7f" />
            <rect x="3" y="1" width="8" height="5" fill="#e8edf6" />
            <rect x="4" y="9" width="7" height="5" fill="#2b3c7f" />
          </svg>
          <svg width="15" height="14" viewBox="0 0 15 14">
            <path d="M3 8Q3 3 8 3H12Q14 3 14 6V9" stroke="#3d7cd0" strokeWidth="2.5" fill="none" />
            <path d="M0 6L3 11L7 6Z" fill="#3d7cd0" transform="translate(0 -1)" />
          </svg>
          <Caret className="-ml-[1px]" />
          <svg width="15" height="14" viewBox="0 0 15 14" className="ml-[5px]">
            <path d="M12 8Q12 3 7 3H3Q1 3 1 6V9" stroke="#9db3c9" strokeWidth="2.5" fill="none" />
            <path d="M8 5L12 10L15 5Z" fill="#9db3c9" />
          </svg>
          <Caret className="opacity-40 -ml-[1px]" />
        </div>
        <svg width="8" height="8" viewBox="0 0 8 8" className="ml-[6px]">
          <path d="M0 1H7M0 4L3.5 7.5L7 4Z" stroke="#1f3f6f" fill="#1f3f6f" />
        </svg>
        <div className="ml-[334px] w-[85px] h-[8px] mt-[3px] rounded bg-[#55788f]/50 blur-[3px]" />
        <span className="ml-[10px] mt-[3px] text-[12px] tracking-[-0.3px] leading-[24px] text-[#101c28] whitespace-nowrap">Intenetopravaznovu - Microsoft Excel</span>
        <div className="ml-[14px] w-[85px] h-[8px] mt-[3px] rounded bg-[#55788f]/50 blur-[3px]" />
      </div>
      <div className="absolute right-[4px] top-0 h-[18px] flex rounded-b-[4px] border border-t-0 border-[#39485a] overflow-hidden shadow-[0_0_0_1px_#d5e6f5]">
        <div className="w-[28px] bg-gradient-to-b from-[#d0d9e3] to-[#8ea5bc] border-r border-[#4a5a6c] flex items-center justify-center">
          <span className="w-[11px] h-[4px] mt-[4px] bg-white border border-[#555]" />
        </div>
        <div className="w-[28px] bg-gradient-to-b from-[#d0d9e3] to-[#8ea5bc] border-r border-[#4a5a6c] flex items-center justify-center">
          <svg width="12" height="11" viewBox="0 0 12 11"><path d="M3.5 .5H11.5V7.5H3.5ZM.5 3.5H8.5V10.5H.5Z" fill="#e6edf4" stroke="#333" /></svg>
        </div>
        <div className="w-[45px] bg-gradient-to-b from-[#df8d7f] to-[#bd3a28] flex items-center justify-center">
          <svg width="13" height="10" viewBox="0 0 13 10"><path d="M2 1L11 9M11 1L2 9" stroke="#fff" strokeWidth="2.6" /></svg>
        </div>
      </div>
    </div>
  );
}

function TabRow() {
  const labels: [string, number][] = [
    ['Vložení', 17],
    ['Rozložení stránky', 30],
    ['Vzorce', 29],
    ['Data', 29],
    ['Revize', 29],
    ['Zobrazení', 28],
  ];
  return (
    <div className="h-[25px] bg-[#bfdbff] flex items-end pl-[48px] text-[11px] text-[#15428b] whitespace-nowrap">
      <div className="w-[54px] h-[23px] rounded-t-[3px] border border-b-0 border-[#9cc0e8] bg-gradient-to-b from-[#fafcfe] to-[#d9e6f6] text-center leading-[23px]">Domů</div>
      {labels.map(([l, ml]) => (
        <div key={l} className="h-[23px] leading-[24px]" style={{ marginLeft: ml }}>{l}</div>
      ))}
      <div className="ml-auto h-[25px] flex items-center gap-[10px] pr-[6px]">
        <svg width="15" height="15" viewBox="0 0 15 15">
          <circle cx="7.5" cy="7.5" r="7" fill="#2a62c8" stroke="#9bb8e6" />
          <text x="7.5" y="11.5" textAnchor="middle" fontSize="11" fontWeight="700" fontFamily="'Liberation Sans', sans-serif" fill="#fff">?</text>
        </svg>
        <span className="w-[10px] h-[2px] mt-[6px] bg-[#6f8094]" />
        <svg width="12" height="9" viewBox="0 0 12 9" className="ml-[4px]"><path d="M2.5.5H11.5V6.5H2.5ZM.5 2.5H9.5V8.5H.5Z" fill="#cfdcec" stroke="#6f8094" /></svg>
        <svg width="10" height="10" viewBox="0 0 10 10" className="ml-[5px]"><path d="M1 1L9 9M9 1L1 9" stroke="#6f8094" strokeWidth="2" /></svg>
      </div>
    </div>
  );
}

function OfficeButton() {
  return (
    <div className="absolute z-30 left-[3px] top-[4px] w-[38px] h-[38px] rounded-full border border-[#8a9099] bg-gradient-to-b from-[#f4f5f6] to-[#b9bec6] flex items-center justify-center shadow-[0_1px_2px_#5a6a7a]">
      <svg width="26" height="26" viewBox="0 0 26 26">
        <rect x="1" y="1" width="11" height="11" rx="2" fill="none" stroke="#d9531e" strokeWidth="2.5" />
        <rect x="14" y="2" width="9" height="8" rx="1.5" fill="none" stroke="#5ca343" strokeWidth="2.5" />
        <rect x="2" y="14" width="9" height="10" rx="1.5" fill="#f2a71c" />
        <rect x="14" y="14" width="10" height="10" rx="1.5" fill="none" stroke="#4f8fd0" strokeWidth="2" strokeDasharray="2 1.5" />
      </svg>
    </div>
  );
}

export default function App() {
  return (
    <div className="relative w-[1366px] h-[768px] overflow-hidden flex flex-col bg-[#bfdbff]" style={UI}>
      <TitleBar />
      <TabRow />
      <Ribbon />
      <FormulaBar />
      <div className="flex h-[522px]">
        <Sheet />
        <VScrollbar />
      </div>
      <SheetTabs />
      <StatusBar />
      <Taskbar />
      <OfficeButton />
    </div>
  );
}
